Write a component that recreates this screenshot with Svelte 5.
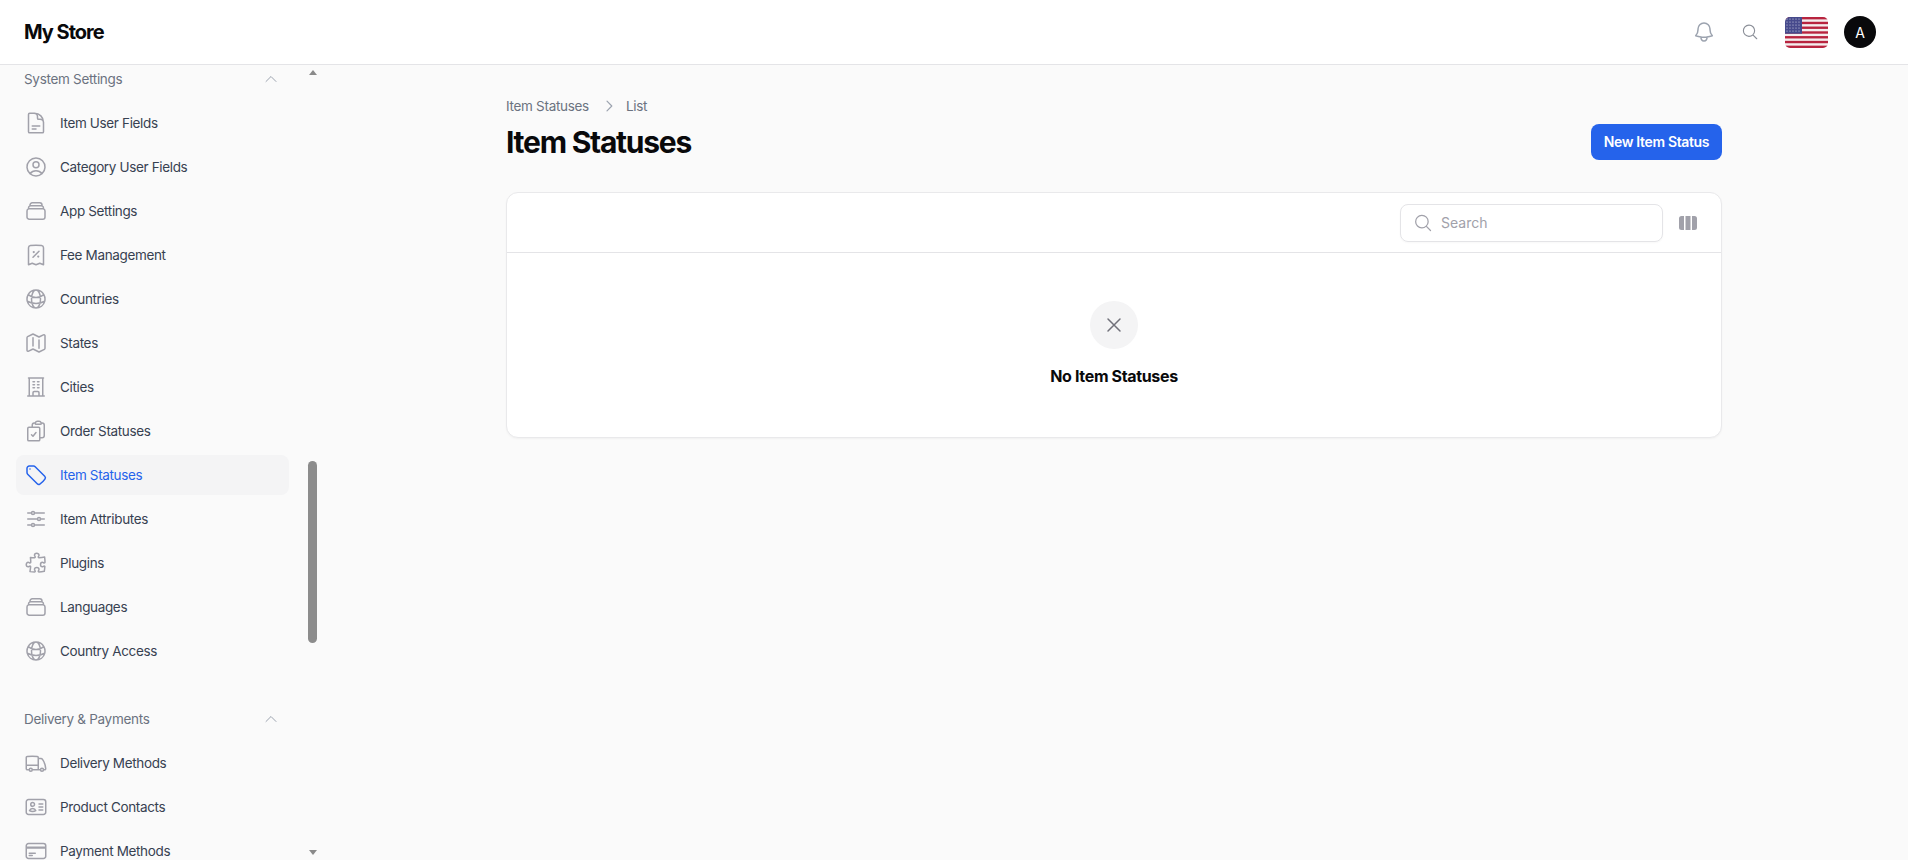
<script>
  const settings = [
    { label: 'Item User Fields', icon: 'doc' },
    { label: 'Category User Fields', icon: 'user' },
    { label: 'App Settings', icon: 'stack' },
    { label: 'Fee Management', icon: 'receipt' },
    { label: 'Countries', icon: 'globe' },
    { label: 'States', icon: 'map' },
    { label: 'Cities', icon: 'building' },
    { label: 'Order Statuses', icon: 'clipboard' },
    { label: 'Item Statuses', icon: 'tag', active: true },
    { label: 'Item Attributes', icon: 'sliders' },
    { label: 'Plugins', icon: 'puzzle' },
    { label: 'Languages', icon: 'stack' },
    { label: 'Country Access', icon: 'globe' }
  ];
  const delivery = [
    { label: 'Delivery Methods', icon: 'truck' },
    { label: 'Product Contacts', icon: 'idcard' },
    { label: 'Payment Methods', icon: 'card' }
  ];
  const groups = [
    { title: 'System Settings', items: settings },
    { title: 'Delivery & Payments', items: delivery }
  ];
  const paths = {
    doc: 'M19.5 14.25v-2.625a3.375 3.375 0 00-3.375-3.375h-1.5A1.125 1.125 0 0113.5 7.125v-1.5a3.375 3.375 0 00-3.375-3.375H8.25m0 12.75h7.5m-7.5 3H12M10.5 2.25H5.625c-.621 0-1.125.504-1.125 1.125v17.25c0 .621.504 1.125 1.125 1.125h12.75c.621 0 1.125-.504 1.125-1.125V11.25a9 9 0 00-9-9z',
    user: 'M17.98 18.73A7.49 7.49 0 0 0 12 15.75a7.49 7.49 0 0 0-5.98 2.98m11.96 0a9 9 0 1 0-11.96 0m11.96 0A8.97 8.97 0 0 1 12 21a8.97 8.97 0 0 1-5.98-2.27M15 9.75a3 3 0 1 1-6 0 3 3 0 0 1 6 0Z',
    stack: 'M6 6.88V6a2.25 2.25 0 0 1 2.25-2.25h7.5A2.25 2.25 0 0 1 18 6v.88m-12 0c.24-.08.49-.13.75-.13h10.5c.26 0 .51.05.75.13m-12 0A2.25 2.25 0 0 0 4.5 9v.88m13.5-3A2.25 2.25 0 0 1 19.5 9v.88m0 0a2.25 2.25 0 0 0-.75-.13H5.25c-.26 0-.51.05-.75.13m15 0c.87.3 1.5 1.13 1.5 2.12v6A2.25 2.25 0 0 1 18.75 20.25H5.25A2.25 2.25 0 0 1 3 18v-6c0-.99.63-1.82 1.5-2.12',
    receipt: 'M9 14.25l6-6m4.5-3.493V21.75l-3.75-1.5-3.75 1.5-3.75-1.5-3.75 1.5V4.757c0-1.108.806-2.057 1.907-2.185a48.507 48.507 0 0111.186 0c1.1.128 1.907 1.077 1.907 2.185zM9.75 9h.008v.008H9.75V9zm.375 0a.375.375 0 11-.75 0 .375.375 0 01.75 0zm4.125 4.5h.008v.008h-.008V13.5zm.375 0a.375.375 0 11-.75 0 .375.375 0 01.75 0z',
    globe: 'M12 21a9.004 9.004 0 008.716-6.747M12 21a9.004 9.004 0 01-8.716-6.747M12 21c2.485 0 4.5-4.03 4.5-9S14.485 3 12 3m0 18c-2.485 0-4.5-4.03-4.5-9S9.515 3 12 3m0 0a8.997 8.997 0 017.843 4.582M12 3a8.997 8.997 0 00-7.843 4.582m15.686 0A11.953 11.953 0 0112 10.5c-2.998 0-5.74-1.1-7.843-2.918m15.686 0A8.959 8.959 0 0121 12c0 .778-.099 1.533-.284 2.253m0 0A17.919 17.919 0 0112 16.5c-3.162 0-6.133-.815-8.716-2.247m0 0A9.015 9.015 0 013 12c0-1.605.42-3.113 1.157-4.418',
    map: 'M9 6.75V15m6-6v8.25m.503 3.498l4.875-2.437c.381-.19.622-.58.622-1.006V4.82c0-.836-.88-1.38-1.628-1.006l-3.869 1.934c-.317.159-.69.159-1.006 0L9.503 3.252a1.125 1.125 0 00-1.006 0L3.622 5.689C3.24 5.88 3 6.27 3 6.695V19.18c0 .836.88 1.38 1.628 1.006l3.869-1.934c.317-.159.69-.159 1.006 0l4.994 2.497c.317.158.69.158 1.006 0z',
    building: 'M3.75 21h16.5M4.5 3h15M5.25 3v18m13.5-18v18M9 6.75h1.5m-1.5 3h1.5m-1.5 3h1.5m3-6H15m-1.5 3H15m-1.5 3H15M9 21v-3.375c0-.621.504-1.125 1.125-1.125h3.75c.621 0 1.125.504 1.125 1.125V21',
    clipboard: 'M11.35 3.836c-.065.21-.1.433-.1.664 0 .414.336.75.75.75h4.5a.75.75 0 00.75-.75 2.25 2.25 0 00-.1-.664m-5.8 0A2.251 2.251 0 0113.5 2.25H15c1.012 0 1.867.668 2.15 1.586m-5.8 0c-.376.023-.75.05-1.124.08C9.095 4.01 8.25 4.973 8.25 6.108V8.25m8.9-4.414c.376.023.75.05 1.124.08 1.131.094 1.976 1.057 1.976 2.192V16.5A2.25 2.25 0 0118 18.75h-2.25m-7.5-10.5H4.875c-.621 0-1.125.504-1.125 1.125v11.25c0 .621.504 1.125 1.125 1.125h9.75c.621 0 1.125-.504 1.125-1.125V18.75m-7.5-10.5h6.375c.621 0 1.125.504 1.125 1.125v9.375m-8.25-3l1.5 1.5 3-3.75',
    tag: 'M9.57 3H5.25A2.25 2.25 0 0 0 3 5.25v4.32c0 .6.24 1.17.66 1.59l9.58 9.58c.7.7 1.75.88 2.6.34a18.1 18.1 0 0 0 5.22-5.22c.54-.85.36-1.9-.34-2.6L11.16 3.66A2.25 2.25 0 0 0 9.57 3ZM6 6h.01',
    sliders: 'M10.5 6h9.75M10.5 6a1.5 1.5 0 1 1-3 0m3 0a1.5 1.5 0 1 0-3 0M3.75 6H7.5m3 12h9.75m-9.75 0a1.5 1.5 0 0 1-3 0m3 0a1.5 1.5 0 0 0-3 0m-3.75 0H7.5m9-6h3.75m-3.75 0a1.5 1.5 0 0 1-3 0m3 0a1.5 1.5 0 0 0-3 0m-9.75 0h9.75',
    puzzle: 'M14.25 6.087c0-.355.186-.676.401-.959.221-.29.349-.634.349-1.003 0-1.036-1.007-1.875-2.25-1.875s-2.25.84-2.25 1.875c0 .369.128.713.349 1.003.215.283.401.604.401.959v0a.64.64 0 01-.657.643 48.39 48.39 0 01-4.163-.3c.186 1.613.293 3.25.315 4.907a.656.656 0 01-.658.663v0c-.355 0-.676-.186-.959-.401a1.647 1.647 0 00-1.003-.349c-1.036 0-1.875 1.007-1.875 2.25s.84 2.25 1.875 2.25c.369 0 .713-.128 1.003-.349.283-.215.604-.401.959-.401v0c.31 0 .555.26.532.57a48.039 48.039 0 01-.642 5.056c1.518.19 3.058.309 4.616.354a.64.64 0 00.657-.643v0c0-.355-.186-.676-.401-.959a1.647 1.647 0 01-.349-1.003c0-1.035 1.008-1.875 2.25-1.875 1.243 0 2.25.84 2.25 1.875 0 .369-.128.713-.349 1.003-.215.283-.4.604-.4.959v0c0 .333.277.599.61.58a48.1 48.1 0 005.427-.63 48.05 48.05 0 00.582-4.717.532.532 0 00-.533-.57v0c-.355 0-.676.186-.959.401-.29.221-.634.349-1.003.349-1.035 0-1.875-1.007-1.875-2.25s.84-2.25 1.875-2.25c.37 0 .713.128 1.003.349.283.215.604.401.96.401v0a.656.656 0 00.658-.663 48.422 48.422 0 00-.37-5.36c-1.886.342-3.81.574-5.766.689a.578.578 0 01-.61-.58v0z',
    truck: 'M8.25 18.75a1.5 1.5 0 01-3 0m3 0a1.5 1.5 0 00-3 0m3 0h6m-9 0H3.375a1.125 1.125 0 01-1.125-1.125V14.25m17.25 4.5a1.5 1.5 0 01-3 0m3 0a1.5 1.5 0 00-3 0m3 0h1.125c.621 0 1.129-.504 1.09-1.124a17.902 17.902 0 00-3.213-9.193 2.056 2.056 0 00-1.58-.86H14.25M16.5 18.75h-2.25m0-11.177v-.958c0-.568-.422-1.048-.987-1.106a48.554 48.554 0 00-10.026 0 1.106 1.106 0 00-.987 1.106v7.635m12-6.677v6.677m0 4.5v-4.5m0 0h-12',
    idcard: 'M15 9h3.75M15 12h3.75M15 15h3.75M4.5 19.5h15a2.25 2.25 0 002.25-2.25V6.75A2.25 2.25 0 0019.5 4.5h-15a2.25 2.25 0 00-2.25 2.25v10.5A2.25 2.25 0 004.5 19.5zm6-10.125a1.875 1.875 0 11-3.75 0 1.875 1.875 0 013.75 0zm1.294 6.336a6.721 6.721 0 01-3.17.789 6.721 6.721 0 01-3.168-.789 3.376 3.376 0 016.338 0z',
    card: 'M2.25 8.25h19.5M2.25 9h19.5m-16.5 5.25h6m-6 2.25h3m-3.75 3h15a2.25 2.25 0 0 0 2.25-2.25V6.75A2.25 2.25 0 0 0 19.5 4.5h-15a2.25 2.25 0 0 0-2.25 2.25v10.5A2.25 2.25 0 0 0 4.5 19.5Z'
  };
</script>

<div class="page">
  <header class="topbar">
    <div class="brand">My Store</div>
    <div class="actions">
      <svg class="bell" viewBox="0 0 24 24" fill="none" stroke="currentColor" stroke-width="1.5" stroke-linecap="round" stroke-linejoin="round"><path d="M14.857 17.082a23.848 23.848 0 005.454-1.31A8.967 8.967 0 0118 9.75V9A6 6 0 006 9v.75a8.967 8.967 0 01-2.312 6.022c1.733.64 3.56 1.085 5.455 1.31m5.714 0a24.255 24.255 0 01-5.714 0m5.714 0a3 3 0 11-5.714 0"/></svg>
      <svg class="lens" viewBox="0 0 24 24" fill="none" stroke="currentColor" stroke-width="1.5" stroke-linecap="round" stroke-linejoin="round"><path d="m21 21-5.2-5.2m0 0A7.5 7.5 0 1 0 5.2 5.2a7.5 7.5 0 0 0 10.6 10.6Z"/></svg>
      <svg class="flag" viewBox="0 0 43 31">
        <defs><clipPath id="flagclip"><rect width="43" height="31" rx="5"/></clipPath></defs>
        <g clip-path="url(#flagclip)">
          <rect width="43" height="31" fill="#f4eeee"/>
          {#each [0, 1, 2, 3, 4, 5, 6] as i}
            <rect y={i * 4.77} width="43" height="2.38" fill="#b8243f"/>
          {/each}
          <rect width="17" height="16.7" fill="#464a8c"/>
          {#each [2, 5, 8, 11, 14] as x}
            {#each [2, 5, 8, 11, 14] as y}
              <circle cx={x} cy={y} r=".6" fill="#d9d9ea"/>
            {/each}
          {/each}
        </g>
      </svg>
      <div class="avatar">A</div>
    </div>
  </header>

  <div class="body">
    <aside class="sidebar">
      <nav class="nav">
        {#each groups as group}
          <section class="group">
            <div class="group-head">
              <span>{group.title}</span>
              <svg viewBox="0 0 24 24" fill="none" stroke="currentColor" stroke-width="1.5" stroke-linecap="round" stroke-linejoin="round"><path d="m4.5 15.75 7.5-7.5 7.5 7.5"/></svg>
            </div>
            <ul>
              {#each group.items as item}
                <li class:active={item.active}>
                  <svg viewBox="0 0 24 24" fill="none" stroke="currentColor" stroke-width="1.5" stroke-linecap="round" stroke-linejoin="round"><path d={paths[item.icon]}/></svg>
                  <span>{item.label}</span>
                </li>
              {/each}
            </ul>
          </section>
        {/each}
      </nav>
      <div class="scrollbar">
        <span class="arrow up"></span>
        <div class="track"><div class="thumb"></div></div>
        <span class="arrow down"></span>
      </div>
    </aside>

    <main class="main">
      <div class="container">
        <div class="crumbs">
          <span>Item Statuses</span>
          <svg viewBox="0 0 20 20" fill="none" stroke="currentColor" stroke-width="1.5" stroke-linecap="round" stroke-linejoin="round"><path d="m7.5 4 6 6-6 6"/></svg>
          <span>List</span>
        </div>
        <div class="heading">
          <h1>Item Statuses</h1>
          <button class="primary">New Item Status</button>
        </div>
        <div class="card">
          <div class="toolbar">
            <label class="search">
              <svg viewBox="0 0 24 24" fill="none" stroke="currentColor" stroke-width="1.5" stroke-linecap="round" stroke-linejoin="round"><path d="m21 21-5.2-5.2m0 0A7.5 7.5 0 1 0 5.2 5.2a7.5 7.5 0 0 0 10.6 10.6Z"/></svg>
              <input placeholder="Search" />
            </label>
            <svg class="columns" viewBox="0 0 18 14" fill="currentColor"><path d="M5 0v14H2.5A2.5 2.5 0 0 1 0 11.5v-9A2.5 2.5 0 0 1 2.5 0H5ZM6.5 0h5v14h-5V0ZM13 0h2.5A2.5 2.5 0 0 1 18 2.5v9a2.5 2.5 0 0 1-2.5 2.5H13V0Z"/></svg>
          </div>
          <div class="empty">
            <div class="empty-icon">
              <svg viewBox="0 0 24 24" fill="none" stroke="currentColor" stroke-width="1.5" stroke-linecap="round" stroke-linejoin="round"><path d="M6 18 18 6M6 6l12 12"/></svg>
            </div>
            <h2>No Item Statuses</h2>
          </div>
        </div>
      </div>
    </main>
  </div>
</div>

<style>
  :global(body) {
    margin: 0;
    background: #fafafa;
  }

  * {
    box-sizing: border-box;
  }

  .page {
    height: 860px;
    display: flex;
    flex-direction: column;
    overflow: hidden;
    font-family: Inter, 'Liberation Sans', sans-serif;
    color: #030712;
  }

  .topbar {
    height: 65px;
    flex: none;
    display: flex;
    align-items: center;
    justify-content: space-between;
    padding: 0 32px 0 24px;
    background: #fff;
    border-bottom: 1px solid #e4e4e7;
  }

  .brand {
    font-size: 20px;
    font-weight: 700;
    letter-spacing: -1px;
    color: #09090b;
  }

  .actions {
    display: flex;
    align-items: center;
  }

  .bell {
    width: 24px;
    height: 24px;
    color: #9ca3af;
  }

  .lens {
    width: 18px;
    height: 18px;
    color: #8b8f98;
    margin-left: 25px;
  }

  .flag {
    width: 43px;
    height: 31px;
    margin-left: 26px;
    display: block;
  }

  .avatar {
    width: 32px;
    height: 32px;
    margin-left: 16px;
    border-radius: 50%;
    background: #09090b;
    color: #fff;
    font-size: 14px;
    display: flex;
    align-items: center;
    justify-content: center;
  }

  .body {
    flex: 1;
    display: flex;
    min-height: 0;
  }

  .sidebar {
    width: 320px;
    flex: none;
    display: flex;
    background: #fafafa;
  }

  .nav {
    flex: 1;
    overflow: hidden;
    padding: 2px 16px 0;
  }

  .group {
    margin-bottom: 36px;
  }

  .group-head {
    height: 24px;
    display: flex;
    align-items: center;
    justify-content: space-between;
    padding: 0 10px 0 8px;
    margin-bottom: 12px;
    font-size: 13.5px;
    color: #6b7280;
    letter-spacing: -0.3px;
  }

  .group-head svg {
    width: 16px;
    height: 16px;
    color: #9ca3af;
  }

  ul {
    list-style: none;
    margin: 0;
    padding: 0;
    display: flex;
    flex-direction: column;
    gap: 4px;
  }

  li {
    height: 40px;
    display: flex;
    align-items: center;
    gap: 12px;
    padding: 0 8px;
    border-radius: 8px;
    font-size: 13.5px;
    letter-spacing: -0.35px;
    color: #374151;
  }

  li svg {
    width: 24px;
    height: 24px;
    flex: none;
    color: #a1a1aa;
  }

  li.active {
    background: #f4f4f5;
    color: #2563eb;
  }

  li.active svg {
    color: #2563eb;
  }

  .scrollbar {
    width: 15px;
    flex: none;
    display: flex;
    flex-direction: column;
    align-items: center;
    background: #fafafa;
  }

  .arrow {
    flex: none;
    width: 0;
    height: 0;
    border-left: 4.5px solid transparent;
    border-right: 4.5px solid transparent;
  }

  .arrow.up {
    margin-top: 5px;
    border-bottom: 5px solid #8a8a8a;
  }

  .arrow.down {
    margin-bottom: 5px;
    border-top: 5px solid #8a8a8a;
  }

  .track {
    flex: 1;
    width: 100%;
    padding-top: 386px;
    display: flex;
    justify-content: center;
  }

  .thumb {
    width: 9px;
    height: 182px;
    border-radius: 5px;
    background: #8c8c8c;
  }

  .main {
    flex: 1;
    min-width: 0;
    padding: 31px 32px 0;
    background: #fafafa;
  }

  .container {
    width: 1216px;
    margin: 0 auto;
  }

  .crumbs {
    display: flex;
    align-items: center;
    gap: 12px;
    height: 20px;
    font-size: 13.5px;
    letter-spacing: -0.3px;
    color: #6b7280;
  }

  .crumbs svg {
    width: 16px;
    height: 16px;
    margin-right: -3px;
    color: #9ca3af;
  }

  .heading {
    display: flex;
    align-items: center;
    justify-content: space-between;
    height: 36px;
    margin-top: 8px;
  }

  h1 {
    margin: 0;
    font-size: 30px;
    font-weight: 700;
    letter-spacing: -1.25px;
    color: #09090b;
  }

  .primary {
    width: 131px;
    height: 36px;
    padding: 0 0 2px;
    border: 0;
    border-radius: 8px;
    background: #2563eb;
    color: #fff;
    font: 600 14px Inter, 'Liberation Sans', sans-serif;
    letter-spacing: -0.35px;
  }

  .card {
    margin-top: 32px;
    height: 246px;
    border: 1px solid #e9e9eb;
    border-radius: 12px;
    background: #fff;
    box-shadow: 0 1px 2px rgba(0, 0, 0, 0.04);
  }

  .toolbar {
    height: 60px;
    display: flex;
    align-items: center;
    justify-content: flex-end;
    gap: 16px;
    padding: 0 24px;
    border-bottom: 1px solid #e4e4e7;
  }

  .search {
    width: 263px;
    height: 38px;
    display: flex;
    align-items: center;
    gap: 6px;
    padding: 0 12px;
    border: 1px solid #e4e4e7;
    border-radius: 8px;
    box-shadow: 0 1px 2px rgba(0, 0, 0, 0.03);
  }

  .search svg {
    width: 20px;
    height: 20px;
    flex: none;
    color: #a1a1aa;
  }

  .search input {
    flex: 1;
    min-width: 0;
    border: 0;
    outline: 0;
    background: none;
    font: 14px Inter, 'Liberation Sans', sans-serif;
  }

  .search input::placeholder {
    color: #a1a1aa;
    opacity: 1;
  }

  .columns {
    width: 18px;
    height: 14px;
    color: #a1a1aa;
  }

  .empty {
    display: flex;
    flex-direction: column;
    align-items: center;
    padding-top: 48px;
  }

  .empty-icon {
    width: 48px;
    height: 48px;
    border-radius: 50%;
    background: #f4f4f5;
    display: flex;
    align-items: center;
    justify-content: center;
  }

  .empty-icon svg {
    width: 24px;
    height: 24px;
    color: #71717a;
  }

  h2 {
    margin: 15px 0 0;
    font-size: 16px;
    line-height: 24px;
    font-weight: 700;
    letter-spacing: -0.35px;
    color: #09090b;
  }
</style>
